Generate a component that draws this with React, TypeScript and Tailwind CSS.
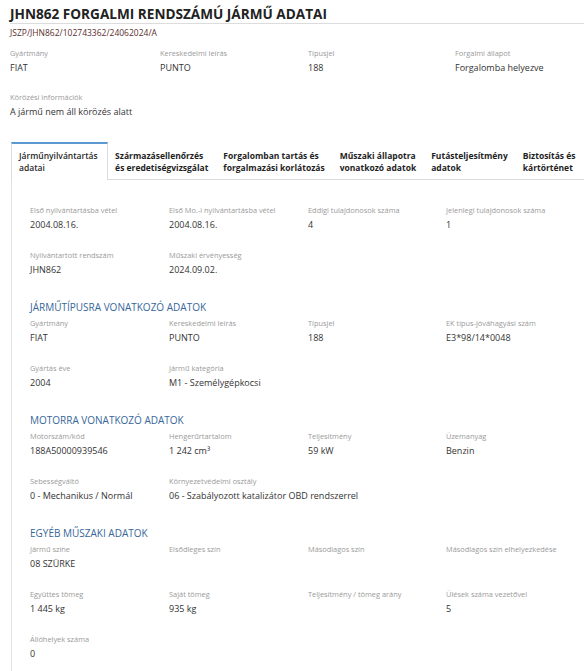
type Item = { label: string; value?: string };

function Field({ label, value }: Item) {
    return (
        <div className="flex flex-col whitespace-nowrap">
            <span className="text-[7.4px] leading-[10px] text-[#9a9a9a]">{label}</span>
            <span className="mt-[4px] min-h-[12px] text-[9px] leading-[12px] text-[#333]">
                {value ?? ""}
            </span>
        </div>
    );
}

function Grid({ rows }: { rows: Item[][] }) {
    return (
        <div className="flex flex-col gap-[19px]">
            {rows.map((row, i) => (
                <div key={i} className="grid grid-cols-[139px_139px_138px_1fr]">
                    {row.map((f, j) => (
                        <Field key={j} label={f.label} value={f.value} />
                    ))}
                </div>
            ))}
        </div>
    );
}

function Section({ title, rows }: { title: string; rows: Item[][] }) {
    return (
        <div className="mt-[24px]">
            <h2 className="mb-[4px] text-[10px] leading-[14px] text-[#37679a]">{title}</h2>
            <Grid rows={rows} />
        </div>
    );
}

const tabs = [
    ["Járműnyilvántartás", "adatai"],
    ["Származásellenőrzés", "és eredetiségvizsgálat"],
    ["Forgalomban tartás és", "forgalmazási korlátozás"],
    ["Műszaki állapotra", "vonatkozó adatok"],
    ["Futásteljesítmény", "adatok"],
    ["Biztosítás és", "kártörténet"],
];

export default function App() {
    return (
        <div className="h-[671px] w-[584px] overflow-hidden bg-white font-['Open_Sans',sans-serif]">
            <div className="pl-[10px]">
                <h1 className="border-b border-[#dcdcdc] pt-[5px] pb-[1px] text-[13.6px] leading-[17px] font-bold text-[#222]">
                    JHN862 FORGALMI RENDSZÁMÚ JÁRMŰ ADATAI
                </h1>
                <div className="mt-[3px] text-[8.5px] leading-[12px] text-[#5a2e2e]">
                    JSZP/JHN862/102743362/24062024/A
                </div>
                <div className="mt-[9px] grid grid-cols-[150px_148px_147px_1fr]">
                    <Field label="Gyártmány" value="FIAT" />
                    <Field label="Kereskedelmi leírás" value="PUNTO" />
                    <Field label="Típusjel" value="188" />
                    <Field label="Forgalmi állapot" value="Forgalomba helyezve" />
                </div>
                <div className="mt-[18px]">
                    <Field label="Körözési információk" value="A jármű nem áll körözés alatt" />
                </div>
            </div>

            <div className="mt-[24px] ml-[11px] flex">
                {tabs.map((t, i) =>
                    i === 0 ? (
                        <div
                            key={i}
                            className="shrink-0 border-x border-t-2 border-[#dcdcdc] border-t-[#5a9ad0] bg-white pt-[6px] pr-[9px] pb-[6px] pl-[7px] text-[8.5px] leading-[11.5px] font-semibold whitespace-nowrap text-[#2a2a2a]"
                        >
                            {t[0]}
                            <br />
                            {t[1]}
                        </div>
                    ) : (
                        <div
                            key={i}
                            className="shrink-0 border-b border-[#dcdcdc] px-[7.5px] pt-[8px] pb-[6px] text-[8.5px] leading-[11.5px] font-bold whitespace-nowrap text-[#1e1e1e]"
                        >
                            {t[0]}
                            <br />
                            {t[1]}
                        </div>
                    )
                )}
                <div className="flex-1 border-b border-[#dcdcdc]" />
            </div>

            <div className="ml-[11px] border-l border-[#e2e2e2] pt-[25px] pb-[20px] pl-[18px]">
                <Grid
                    rows={[
                        [
                            { label: "Első nyilvántartásba vétel", value: "2004.08.16." },
                            { label: "Első Mo.-i nyilvántartásba vétel", value: "2004.08.16." },
                            { label: "Eddigi tulajdonosok száma", value: "4" },
                            { label: "Jelenlegi tulajdonosok száma", value: "1" },
                        ],
                        [
                            { label: "Nyilvántartott rendszám", value: "JHN862" },
                            { label: "Műszaki érvényesség", value: "2024.09.02." },
                        ],
                    ]}
                />
                <Section
                    title="JÁRMŰTÍPUSRA VONATKOZÓ ADATOK"
                    rows={[
                        [
                            { label: "Gyártmány", value: "FIAT" },
                            { label: "Kereskedelmi leírás", value: "PUNTO" },
                            { label: "Típusjel", value: "188" },
                            { label: "EK típus-jóváhagyási szám", value: "E3*98/14*0048" },
                        ],
                        [
                            { label: "Gyártás éve", value: "2004" },
                            { label: "Jármű kategória", value: "M1 - Személygépkocsi" },
                        ],
                    ]}
                />
                <Section
                    title="MOTORRA VONATKOZÓ ADATOK"
                    rows={[
                        [
                            { label: "Motorszám/kód", value: "188A50000939546" },
                            { label: "Hengerűrtartalom", value: "1 242 cm³" },
                            { label: "Teljesítmény", value: "59 kW" },
                            { label: "Üzemanyag", value: "Benzin" },
                        ],
                        [
                            { label: "Sebességváltó", value: "0 - Mechanikus / Normál" },
                            { label: "Környezetvédelmi osztály", value: "06 - Szabályozott katalizátor OBD rendszerrel" },
                        ],
                    ]}
                />
                <Section
                    title="EGYÉB MŰSZAKI ADATOK"
                    rows={[
                        [
                            { label: "Jármű színe", value: "08 SZÜRKE" },
                            { label: "Elsődleges szín" },
                            { label: "Másodlagos szín" },
                            { label: "Másodlagos szín elhelyezkedése" },
                        ],
                        [
                            { label: "Együttes tömeg", value: "1 445 kg" },
                            { label: "Saját tömeg", value: "935 kg" },
                            { label: "Teljesítmény / tömeg arány" },
                            { label: "Ülések száma vezetővel", value: "5" },
                        ],
                        [{ label: "Állóhelyek száma", value: "0" }],
                    ]}
                />
            </div>
        </div>
    );
}
